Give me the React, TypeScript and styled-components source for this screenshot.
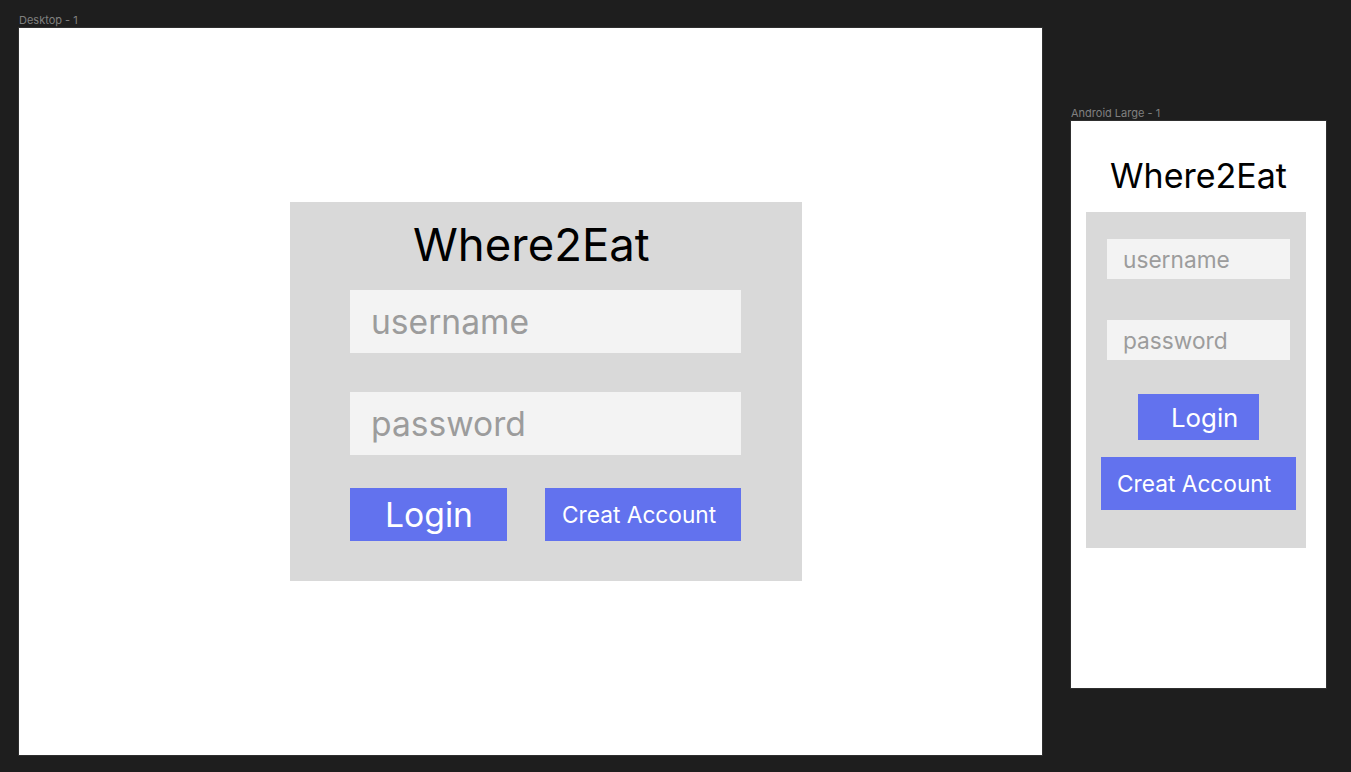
import React from "react";
import styled, { createGlobalStyle } from "styled-components";

const Global = createGlobalStyle`
  html, body { margin: 0; padding: 0; background: #1e1e1e; }
  body { font-family: Inter, "Noto Sans", sans-serif; }
  * { box-sizing: border-box; }
`;

const Canvas = styled.div`
  display: flex;
  align-items: flex-start;
  gap: 29px;
  padding-left: 19px;
  width: 1351px;
  height: 772px;
  overflow: hidden;
`;

const FrameColumn = styled.div<{ $top: number }>`
  display: flex;
  flex-direction: column;
  margin-top: ${(p) => p.$top}px;
`;

const FrameLabel = styled.div`
  font-family: Inter, sans-serif;
  font-size: 11px;
  line-height: 15px;
  height: 15px;
  color: #808080;
  white-space: nowrap;
`;

const DesktopFrame = styled.div`
  width: 1023px;
  height: 727px;
  background: #ffffff;
  padding: 174px 0 0 271px;
  box-shadow: 0 0 0 1px rgba(255, 255, 255, 0.08);
`;

const DesktopCard = styled.div`
  width: 512px;
  height: 379px;
  background: #d9d9d9;
  padding: 0 61px 0 60px;
  display: flex;
  flex-direction: column;
`;

const Title = styled.div<{ $size: number; $lh: number; $pt: number; $h: number; $pl?: number; $center?: boolean }>`
  font-family: Inter, sans-serif;
  font-size: ${(p) => p.$size}px;
  line-height: ${(p) => p.$lh}px;
  height: ${(p) => p.$h}px;
  padding-top: ${(p) => p.$pt}px;
  padding-left: ${(p) => p.$pl ?? 0}px;
  color: #000;
  white-space: nowrap;
  text-align: ${(p) => (p.$center ? "center" : "left")};
`;

const Field = styled.div<{ $w: number; $h: number; $size: number; $pl: number; $mt: number }>`
  width: ${(p) => p.$w}px;
  height: ${(p) => p.$h}px;
  margin-top: ${(p) => p.$mt}px;
  background: #f3f3f3;
  display: flex;
  align-items: center;
  padding-left: ${(p) => p.$pl}px;
  font-family: Inter, sans-serif;
  font-size: ${(p) => p.$size}px;
  color: #9c9c9c;
  white-space: nowrap;
`;

const ButtonRow = styled.div`
  display: flex;
  justify-content: space-between;
  margin-top: 33px;
`;

const Button = styled.div<{ $w: number; $h: number; $size: number; $pl: number; $mt?: number; $ml?: number }>`
  width: ${(p) => p.$w}px;
  height: ${(p) => p.$h}px;
  margin-top: ${(p) => p.$mt ?? 0}px;
  margin-left: ${(p) => p.$ml ?? 0}px;
  background: #6272ee;
  color: #ffffff;
  display: flex;
  align-items: center;
  padding-left: ${(p) => p.$pl}px;
  font-family: Inter, sans-serif;
  font-size: ${(p) => p.$size}px;
  white-space: nowrap;
  flex-shrink: 0;
`;

const PhoneFrame = styled.div`
  width: 255px;
  height: 567px;
  background: #ffffff;
  padding: 0 0 0 15px;
  display: flex;
  flex-direction: column;
  box-shadow: 0 0 0 1px rgba(255, 255, 255, 0.08);
`;

const PhoneTitle = styled(Title)`
  width: 225px;
`;

const PhoneCard = styled.div`
  width: 220px;
  height: 336px;
  background: #d9d9d9;
  padding: 0 0 0 21px;
  display: flex;
  flex-direction: column;
`;

export default function App() {
  return (
    <>
      <Global />
      <Canvas>
        <FrameColumn $top={13}>
          <FrameLabel>Desktop - 1</FrameLabel>
          <DesktopFrame>
            <DesktopCard>
              <Title $size={45.5} $lh={58} $pt={14} $h={88} $pl={63}>
                Where2Eat
              </Title>
              <Field $w={391} $h={63} $size={33.6} $pl={21} $mt={0}>
                username
              </Field>
              <Field $w={391} $h={63} $size={33.6} $pl={21} $mt={39}>
                password
              </Field>
              <ButtonRow>
                <Button $w={157} $h={53} $size={33.7} $pl={35}>
                  Login
                </Button>
                <Button $w={196} $h={53} $size={22.7} $pl={17}>
                  Creat Account
                </Button>
              </ButtonRow>
            </DesktopCard>
          </DesktopFrame>
        </FrameColumn>
        <FrameColumn $top={106}>
          <FrameLabel>Android Large - 1</FrameLabel>
          <PhoneFrame>
            <PhoneTitle $size={34} $lh={44} $pt={33} $h={91} $center>
              Where2Eat
            </PhoneTitle>
            <PhoneCard>
              <Field $w={183} $h={40} $size={22.7} $pl={16} $mt={27}>
                username
              </Field>
              <Field $w={183} $h={40} $size={22.7} $pl={16} $mt={41}>
                password
              </Field>
              <Button $w={121} $h={46} $size={25.8} $pl={33} $mt={34} $ml={31}>
                Login
              </Button>
              <Button $w={195} $h={53} $size={22.7} $pl={16} $mt={17} $ml={-6}>
                Creat Account
              </Button>
            </PhoneCard>
          </PhoneFrame>
        </FrameColumn>
      </Canvas>
    </>
  );
}
